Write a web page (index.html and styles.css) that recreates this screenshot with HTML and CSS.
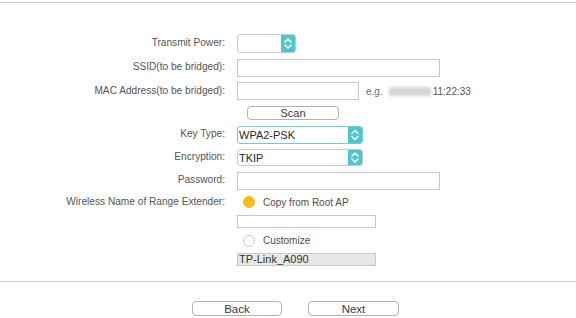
FILE: index.html
```html
<!DOCTYPE html>
<html>
<head>
<meta charset="utf-8">
<link rel="stylesheet" href="styles.css">
</head>
<body>
<div class="rule top"></div>
<div class="form">
  <div class="label">Transmit Power:</div>
  <div class="ctl"><div class="select sel-small"><span class="val"></span><span class="arrow"><svg width="14" height="19" viewBox="0 0 14 19"><path d="M4 8 L7 5 L10 8 M4 11 L7 14 L10 11" fill="none" stroke="#fff" stroke-width="1.6" stroke-linecap="round" stroke-linejoin="round"/></svg></span></div></div>

  <div class="label">SSID(to be bridged):</div>
  <div class="ctl"><div class="input wide"></div></div>

  <div class="label">MAC Address(to be bridged):</div>
  <div class="ctl"><div class="input mac"></div><span class="eg">e.g.</span><span class="blur"></span><span class="hint">11:22:33</span></div>

  <div class="label"></div>
  <div class="ctl"><div class="btn scan">Scan</div></div>

  <div class="label">Key Type:</div>
  <div class="ctl"><div class="select sel-big focus"><span class="val">WPA2-PSK</span><span class="arrow"><svg width="14" height="18" viewBox="0 0 14 18"><path d="M4 7.5 L7 4.5 L10 7.5 M4 10.5 L7 13.5 L10 10.5" fill="none" stroke="#fff" stroke-width="1.6" stroke-linecap="round" stroke-linejoin="round"/></svg></span></div></div>

  <div class="label">Encryption:</div>
  <div class="ctl"><div class="select sel-big enc"><span class="val">TKIP</span><span class="arrow"><svg width="14" height="17" viewBox="0 0 14 17"><path d="M4 7 L7 4 L10 7 M4 10 L7 13 L10 10" fill="none" stroke="#fff" stroke-width="1.6" stroke-linecap="round" stroke-linejoin="round"/></svg></span></div></div>

  <div class="label">Password:</div>
  <div class="ctl"><div class="input wide"></div></div>

  <div class="label">Wireless Name of Range Extender:</div>
  <div class="ctl"><span class="radio on"></span><span class="rtext">Copy from Root AP</span></div>

  <div class="label"></div>
  <div class="ctl"><div class="input small"></div></div>

  <div class="label"></div>
  <div class="ctl"><span class="radio"></span><span class="rtext">Customize</span></div>

  <div class="label"></div>
  <div class="ctl"><div class="input small disabled">TP-Link_A090</div></div>
</div>
<div class="rule bottom"></div>
<div class="actions">
  <div class="btn back">Back</div>
  <div class="btn next">Next</div>
</div>
</body>
</html>
```

FILE: styles.css
```css
html, body {
  margin: 0;
  padding: 0;
  background: #fff;
  font-family: "Liberation Sans", Arial, sans-serif;
  color: #555;
}
.rule {
  border-top: 1px solid #cfcfcf;
  height: 0;
}
.rule.top { margin-top: 2px; }
.rule.bottom { margin-top: 11px; }
.form {
  display: grid;
  grid-template-columns: 225px auto;
  grid-template-rows: 25px 23px 24px 19px 25px 21px 25px 18px 21px 17px 21px;
  column-gap: 12px;
  padding-top: 28px;
}
.label {
  font-size: 10.15px;
  text-align: right;
  align-self: center;
  margin-top: -2px;
  white-space: nowrap;
  color: #555;
}
.ctl {
  display: flex;
  align-items: center;
}
.select {
  box-sizing: border-box;
  display: flex;
  border: 1px solid #c8c8c8;
  border-radius: 3px;
  background: #fff;
  overflow: hidden;
}
.select .val {
  flex: 1;
  font-size: 11px;
  color: #2a2a2a;
  padding-left: 1px;
  display: flex;
  align-items: center;
}
.select .arrow {
  width: 14px;
  background: #4ec6cf;
  display: flex;
  align-items: center;
  justify-content: center;
}
.select .arrow svg { display: block; }
.sel-small { width: 59px; height: 19px; }
.sel-big { width: 126px; height: 18px; }
.sel-big.enc { height: 17px; }
.select.focus { border-color: #6ccdd4; }
.input {
  box-sizing: border-box;
  border: 1px solid #c6c6c6;
  background: #fff;
  height: 18px;
}
.input.wide { width: 203px; }
.input.mac { width: 122px; }
.input.small {
  width: 139px;
  height: 13px;
}
.input.disabled {
  background: #e7e7e3;
  border-color: #c9c9c6;
  font-size: 11px;
  color: #333;
  line-height: 11px;
  padding-left: 1px;
}
.eg {
  font-size: 10px;
  margin-left: 7px;
  color: #6a6a6a;
}
.blur {
  width: 42px;
  height: 9px;
  margin-left: 6px;
  background: #d6d6d6;
  filter: blur(1.5px);
}
.hint {
  font-size: 10px;
  margin-left: 2px;
  color: #555;
}
.btn {
  box-sizing: border-box;
  border: 1px solid #b2b2b2;
  border-radius: 4px;
  background: #fff;
  font-size: 11px;
  color: #3a3a3a;
  text-align: center;
  display: flex;
  align-items: center;
  justify-content: center;
}
.btn.scan {
  width: 92px;
  height: 14px;
  margin-left: 10px;
}
.radio {
  box-sizing: border-box;
  width: 12px;
  height: 12px;
  border-radius: 50%;
  border: 1px solid #cfcfcf;
  background: #fff;
  margin-left: 6px;
}
.radio.on {
  background: #f7bd12;
  border-color: #f7bd12;
}
.rtext {
  font-size: 10px;
  margin-left: 8px;
  color: #4d4d4d;
}
.actions {
  display: flex;
  gap: 26px;
  padding-left: 192px;
  margin-top: 19px;
}
.btn.back, .btn.next {
  width: 90px;
  height: 15px;
  font-size: 11.5px;
}
.btn.next { width: 91px; }
```
